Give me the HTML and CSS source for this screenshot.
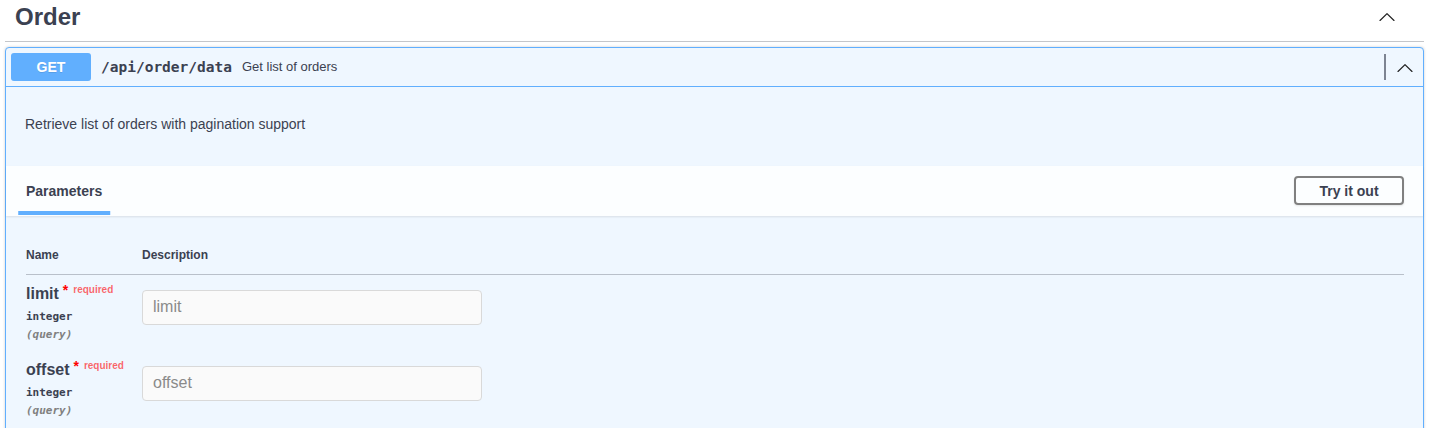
FILE: index.html
```html
<!DOCTYPE html>
<html lang="en">
<head>
<meta charset="utf-8">
<title>Order</title>
<link rel="stylesheet" href="styles.css">
</head>
<body>
<div class="wrapper">
  <h3 class="tag">
    <span class="tag-name">Order</span>
    <span class="tag-arrow">
      <svg width="20" height="20" viewBox="0 0 20 20"><path d="M17.418 14.908c-.228.226-.6.228-.83.002L10 8.38l-6.586 6.53a.59.59 0 0 1-.83-.003.585.585 0 0 1 .002-.827l7.002-6.942a.59.59 0 0 1 .826 0l7.002 6.942a.585.585 0 0 1 .002.828z" fill="#222"/></svg>
    </span>
  </h3>
  <div class="opblock">
    <div class="summary">
      <span class="method">GET</span>
      <span class="path">/api/order/data</span>
      <span class="summary-desc">Get list of orders</span>
      <span class="summary-divider"></span>
      <span class="summary-arrow">
        <svg width="20" height="20" viewBox="0 0 20 20"><path d="M17.418 14.908c-.228.226-.6.228-.83.002L10 8.38l-6.586 6.53a.59.59 0 0 1-.83-.003.585.585 0 0 1 .002-.827l7.002-6.942a.59.59 0 0 1 .826 0l7.002 6.942a.585.585 0 0 1 .002.828z" fill="#222"/></svg>
      </span>
    </div>
    <div class="description">
      <p>Retrieve list of orders with pagination support</p>
    </div>
    <div class="section-header">
      <div class="tab-item"><span class="tab-title">Parameters</span></div>
      <button class="btn-try">Try it out</button>
    </div>
    <div class="table-container">
      <div class="params-head">
        <div class="col-name">Name</div>
        <div class="col-desc">Description</div>
      </div>
      <div class="param-row">
        <div class="col-name">
          <div class="param-name">limit<span class="star">&nbsp;*</span><span class="req">required</span></div>
          <div class="param-type">integer</div>
          <div class="param-in">(query)</div>
        </div>
        <div class="col-desc">
          <input class="param-input" type="text" placeholder="limit" disabled>
        </div>
      </div>
      <div class="param-row">
        <div class="col-name">
          <div class="param-name">offset<span class="star">&nbsp;*</span><span class="req">required</span></div>
          <div class="param-type">integer</div>
          <div class="param-in">(query)</div>
        </div>
        <div class="col-desc">
          <input class="param-input" type="text" placeholder="offset" disabled>
        </div>
      </div>
    </div>
  </div>
</div>
</body>
</html>
```

FILE: styles.css
```css
* { box-sizing: border-box; }
html, body { margin: 0; padding: 0; background: #fff; }
body {
  font-family: "Liberation Sans", Arial, sans-serif;
  color: #3b4151;
  overflow: hidden;
  height: 428px;
}
.wrapper { padding: 0 5px; }

.tag {
  display: flex;
  align-items: center;
  margin: 0 0 5px;
  padding: 3px 27px 10px 10px;
  font-size: 24px;
  font-weight: 700;
  line-height: 27.6px;
  border-bottom: 1px solid rgba(59, 65, 81, 0.3);
  color: #3b4151;
}
.tag-name { flex: 1; }
.tag-arrow { display: flex; width: 20px; height: 20px; margin-top: -1px; }

.opblock {
  border: 1px solid #61affe;
  border-radius: 4px;
  background: #eff7ff;
  box-shadow: 0 0 3px rgba(0, 0, 0, 0.19);
  height: 400px;
}
.summary {
  display: flex;
  align-items: center;
  padding: 5px;
  border-bottom: 1px solid #61affe;
}
.method {
  width: 80px;
  padding: 6px 0;
  text-align: center;
  background: #61affe;
  color: #fff;
  font-size: 14px;
  font-weight: 700;
  line-height: 16px;
  border-radius: 3px;
  text-shadow: 0 1px 0 rgba(0, 0, 0, 0.1);
}
.path {
  padding: 0 10px;
  font-family: "DejaVu Sans Mono", "Liberation Mono", monospace;
  font-weight: 700;
  font-size: 14.5px;
  color: #3b4151;
}
.summary-desc {
  flex: 1;
  font-size: 13px;
  color: #3b4151;
}
.summary-divider {
  width: 2px;
  height: 26px;
  background: #7d8492;
  margin-right: 9px;
}
.summary-arrow { display: flex; width: 20px; height: 20px; margin-right: 3px; margin-top: 1px; }

.description {
  padding: 15px 19px 15px;
  margin-bottom: 5px;
}
.description p {
  margin: 14px 0;
  font-size: 14px;
  line-height: 16px;
  color: #3b4151;
}

.section-header {
  display: flex;
  align-items: center;
  justify-content: space-between;
  min-height: 50px;
  padding: 8px 19px 8px 20px;
  background: rgba(255, 255, 255, 0.8);
  box-shadow: 0 1px 2px rgba(0, 0, 0, 0.1);
}
.tab-item { position: relative; }
.tab-title {
  font-size: 14px;
  font-weight: 700;
  color: #3b4151;
}
.tab-item::after {
  content: "";
  position: absolute;
  left: 50%;
  bottom: -15px;
  width: 120%;
  height: 4px;
  transform: translateX(-50%);
  background: #61affe;
}
.btn-try {
  font-family: "Liberation Sans", Arial, sans-serif;
  font-size: 14px;
  font-weight: 700;
  line-height: 16px;
  color: #3b4151;
  padding: 5px 23px 4px;
  background: transparent;
  border: 2px solid #808080;
  border-radius: 4px;
  box-shadow: 0 1px 2px rgba(0, 0, 0, 0.1);
  width: 110px;
}

.table-container { padding: 20px 19px 20px 20px; }
.params-head {
  display: flex;
  padding: 12px 0;
  font-size: 12px;
  font-weight: 700;
  line-height: 14px;
  border-bottom: 1px solid rgba(59, 65, 81, 0.3);
}
.col-name { width: 116px; flex: none; }
.col-desc { flex: 1; }
.param-row {
  display: flex;
  padding: 10px 0 10px;
  height: 76px;
}
.param-name {
  font-size: 16px;
  font-weight: 700;
  line-height: 18px;
  color: #3b4151;
}
.star {
  color: red;
  font-size: 14px;
  position: relative;
  top: -4px;
}
.req {
  color: rgba(255, 0, 0, 0.6);
  font-size: 10px;
  position: relative;
  top: -6px;
  padding-left: 5px;
}
.param-type {
  font-family: "DejaVu Sans Mono", "Liberation Mono", monospace;
  font-size: 11px;
  font-weight: 700;
  line-height: 14px;
  padding-top: 5px;
  color: #3b4151;
}
.param-in {
  font-family: "DejaVu Sans Mono", "Liberation Mono", monospace;
  font-size: 11px;
  font-style: italic;
  font-weight: 700;
  line-height: 14px;
  padding-top: 4px;
  color: #808080;
}
.param-input {
  display: block;
  width: 340px;
  height: 35px;
  margin: 5px 0;
  padding: 8px 10px;
  font-family: "Liberation Sans", Arial, sans-serif;
  font-size: 16px;
  border: 1px solid #d9d9d9;
  border-radius: 4px;
  background: #fafafa;
  color: #3b4151;
}
.param-input::placeholder { color: #8a8a8a; }
```
